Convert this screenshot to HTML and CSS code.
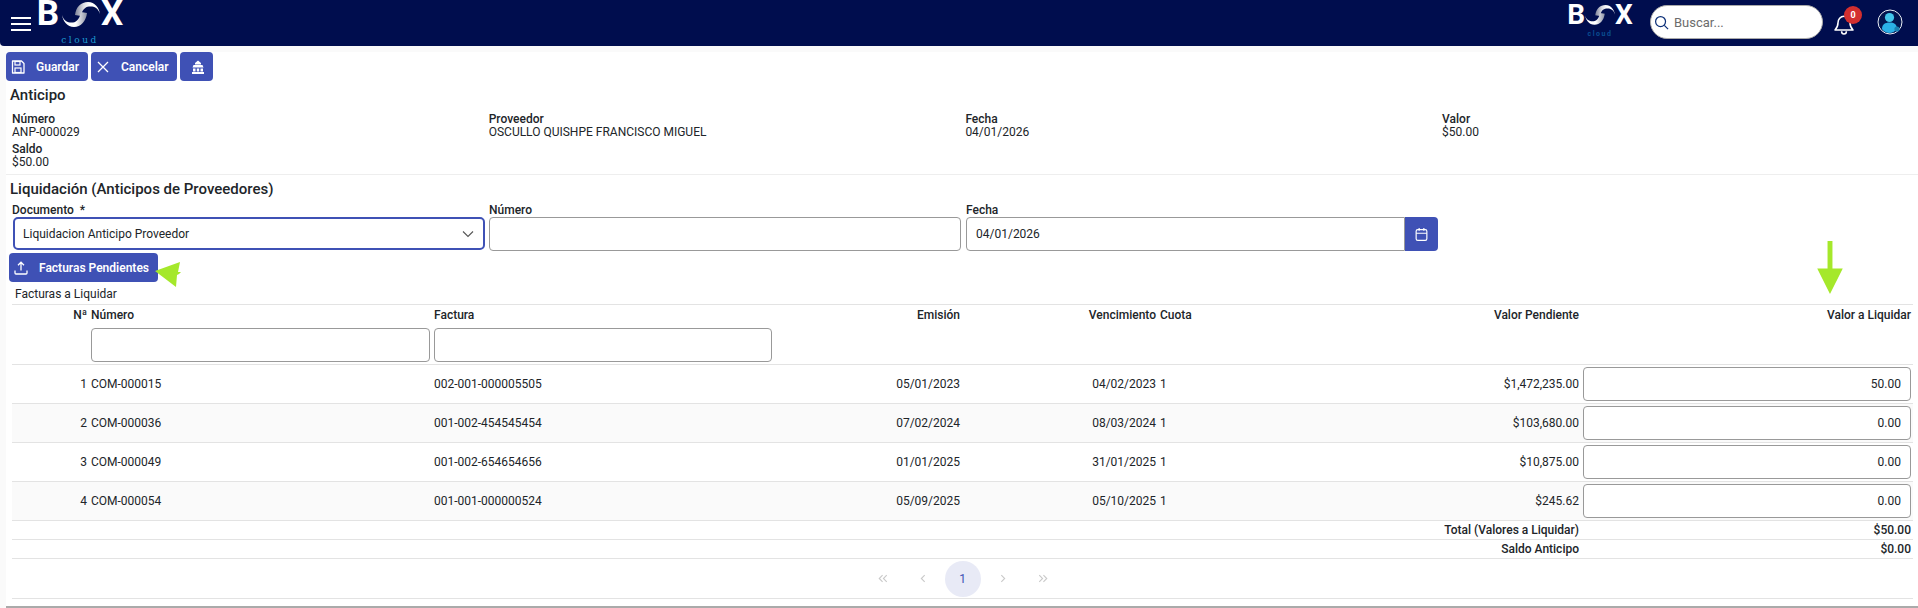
FILE: index.html
```html
<!DOCTYPE html>
<html lang="es">
<head>
<meta charset="utf-8">
<title>Anticipo</title>
<link rel="stylesheet" href="styles.css">
</head>
<body>
<svg class="defs" width="0" height="0" aria-hidden="true">
  <defs>
    <linearGradient id="sw1" gradientUnits="userSpaceOnUse" x1="0" y1="0" x2="25" y2="0"><stop offset="0" stop-color="#fff"/><stop offset=".55" stop-color="#fff"/><stop offset="1" stop-color="#8a8fa3"/></linearGradient>
    <linearGradient id="sw2" gradientUnits="userSpaceOnUse" x1="13" y1="0" x2="38" y2="0"><stop offset="0" stop-color="#7f8499"/><stop offset=".35" stop-color="#dcdde4"/><stop offset=".6" stop-color="#fff"/><stop offset="1" stop-color="#fff"/></linearGradient>
    <symbol id="swoosh" viewBox="0 0 38 26">
      <path d="M13 14C14 6 19 1 26 1C33 1 37 7 38 13C36 6 31 5 27 5.500C23 6 20 9 19 15z" fill="url(#sw2)"/>
      <path d="M0 14C2 21 7 22 11 21.500C15 21 18 17 19 11L25 12C24 20 19 26 12 26C5 26 1 20 0 14z" fill="url(#sw1)"/>
    </symbol>
  </defs>
</svg>
<header class="topbar">
  <button class="menu" aria-label="Menú"><span></span><span></span><span></span></button>
  <div class="logo logo-main">
    <div class="logo-word"><span>B</span><svg class="logo-o"><use href="#swoosh"/></svg><span>X</span></div>
    <div class="logo-sub">cloud</div>
  </div>
  <div class="top-right">
    <div class="logo logo-small">
      <div class="logo-word"><span>B</span><svg class="logo-o"><use href="#swoosh"/></svg><span>X</span></div>
      <div class="logo-sub">cloud</div>
    </div>
    <label class="search">
      <svg class="search-ic" viewBox="0 0 16 16"><circle cx="7" cy="7" r="5.300" fill="none" stroke="#0b2f78" stroke-width="1.300"/><path d="M11 11l4 4" stroke="#0b2f78" stroke-width="1.300"/></svg>
      <input type="text" placeholder="Buscar...">
    </label>
    <div class="bell">
      <svg viewBox="0 0 20 20" class="bell-ic"><path d="M2.500 15c1.500-1.500 2.500-3 2.500-6 0-3 2-5.500 5-5.500s5 2.500 5 5.500c0 3 1 4.500 2.500 6z" fill="none" stroke="#fff" stroke-width="1.300" stroke-linejoin="round"/><path d="M8 16c0 1.500 1 2.300 2 2.300s2-.8 2-2.300" fill="none" stroke="#fff" stroke-width="1.300"/></svg>
      <span class="badge">0</span>
    </div>
    <svg class="avatar" viewBox="0 0 26 26"><circle cx="13" cy="13" r="12" fill="#03154f" stroke="#e9edf5" stroke-width="1"/><circle cx="12.500" cy="8.500" r="4.600" fill="#43c6ec"/><path d="M5 20c0-4.500 3-6.500 7.500-6.500S20 15 20 20c-2 2.800-5 4-7.500 4S6.500 22.500 5 20z" fill="#2bb0e6"/><circle cx="20" cy="20" r="2.600" fill="#1b7fb0"/></svg>
  </div>
</header>

<main class="card">
  <div class="toolbar">
    <button class="btn btn-save"><svg class="ic" viewBox="0 0 16 16"><path d="M2.500 2h9l2.500 2.500v9.500h-11.500z" fill="none" stroke="#fff" stroke-width="1.300" stroke-linejoin="round"/><rect x="5" y="2.500" width="5" height="3.500" fill="none" stroke="#fff" stroke-width="1.200"/><rect x="5" y="9" width="6" height="4.500" fill="none" stroke="#fff" stroke-width="1.200"/></svg><span>Guardar</span></button>
    <button class="btn btn-cancel"><svg class="ic" viewBox="0 0 16 16"><path d="M3 3l10 10M13 3L3 13" stroke="#fff" stroke-width="1.300"/></svg><span>Cancelar</span></button>
    <button class="btn btn-bank" aria-label="Banco"><svg class="ic" viewBox="0 0 16 16"><path d="M8 1.500l3 2.500v1.500H5V4zM3.500 6h9l1 2.500h-11zM3 9.500h2.500v3H3zM6.800 9.500h2.400v3H6.800zM10.500 9.500H13v3h-2.500zM2 13h12v2H2z" fill="#fff"/></svg></button>
  </div>

  <h2 class="title title-first">Anticipo</h2>
  <div class="info">
    <div class="item"><b>Número</b><span>ANP-000029</span></div>
    <div class="item"><b>Proveedor</b><span>OSCULLO QUISHPE FRANCISCO MIGUEL</span></div>
    <div class="item"><b>Fecha</b><span>04/01/2026</span></div>
    <div class="item"><b>Valor</b><span>$50.00</span></div>
    <div class="item"><b>Saldo</b><span>$50.00</span></div>
  </div>
  <hr class="rule">

  <h2 class="title">Liquidación (Anticipos de Proveedores)</h2>
  <div class="form">
    <div class="field">
      <label>Documento&nbsp; *</label>
      <div class="select-wrap">
        <select><option>Liquidacion Anticipo Proveedor</option></select>
        <svg class="chev" viewBox="0 0 12 8"><path d="M1 1.500l5 5 5-5" fill="none" stroke="#555" stroke-width="1.100"/></svg>
      </div>
    </div>
    <div class="field"><label>Número</label><input class="inp" type="text"></div>
    <div class="field">
      <label>Fecha</label>
      <div class="date">
        <input class="inp" type="text" value="04/01/2026">
        <button class="date-btn" aria-label="Calendario"><svg viewBox="0 0 14 14" width="15" height="15"><rect x="2" y="2.500" width="10" height="10" rx="1.500" fill="none" stroke="#fff" stroke-width="1.100"/><path d="M2 5.800h10M4.800 1v2.500M9.200 1v2.500" stroke="#fff" stroke-width="1.100"/></svg></button>
      </div>
    </div>
  </div>

  <div class="pending">
    <button class="btn btn-pend"><svg class="ic" viewBox="0 0 16 16"><path d="M8 10.500V2.500M5 5.200l3-3 3 3M2 10.500v2.500a1 1 0 0 0 1 1h10a1 1 0 0 0 1-1v-2.500" fill="none" stroke="#fff" stroke-width="1.300"/></svg><span>Facturas Pendientes</span></button>
    <svg class="arrow-left" viewBox="0 0 26 25"><path d="M0 9L25 0l-2 10h3l-2 2 -2 1 -1 12z" fill="#a5e82b"/></svg>
  </div>
  <svg class="arrow-down" viewBox="0 0 26 54"><path d="M10.500 0h5v28H26L13 54 0 28h10.500z" fill="#a5e82b"/></svg>

  <div class="subtitle">Facturas a Liquidar</div>
  <table class="grid">
    <colgroup>
      <col class="c-n"><col class="c-num"><col class="c-fac"><col class="c-emi"><col class="c-ven"><col class="c-cuo"><col class="c-pen"><col class="c-val">
    </colgroup>
    <thead>
      <tr>
        <th class="r">Nª</th>
        <th>Número<input class="inp filter" type="text"></th>
        <th>Factura<input class="inp filter" type="text"></th>
        <th class="r">Emisión</th>
        <th class="r">Vencimiento</th>
        <th>Cuota</th>
        <th class="r">Valor Pendiente</th>
        <th class="r">Valor a Liquidar</th>
      </tr>
    </thead>
    <tbody>
      <tr>
        <td class="r">1</td><td>COM-000015</td><td>002-001-000005505</td><td class="r">05/01/2023</td><td class="r">04/02/2023</td><td>1</td><td class="r">$1,472,235.00</td>
        <td><input class="inp amount" type="text" value="50.00"></td>
      </tr>
      <tr class="alt">
        <td class="r">2</td><td>COM-000036</td><td>001-002-454545454</td><td class="r">07/02/2024</td><td class="r">08/03/2024</td><td>1</td><td class="r">$103,680.00</td>
        <td><input class="inp amount" type="text" value="0.00"></td>
      </tr>
      <tr>
        <td class="r">3</td><td>COM-000049</td><td>001-002-654654656</td><td class="r">01/01/2025</td><td class="r">31/01/2025</td><td>1</td><td class="r">$10,875.00</td>
        <td><input class="inp amount" type="text" value="0.00"></td>
      </tr>
      <tr class="alt">
        <td class="r">4</td><td>COM-000054</td><td>001-001-000000524</td><td class="r">05/09/2025</td><td class="r">05/10/2025</td><td>1</td><td class="r">$245.62</td>
        <td><input class="inp amount" type="text" value="0.00"></td>
      </tr>
    </tbody>
    <tfoot>
      <tr><td class="r strong" colspan="7">Total (Valores a Liquidar)</td><td class="r strong">$50.00</td></tr>
      <tr><td class="r strong" colspan="7">Saldo Anticipo</td><td class="r strong">$0.00</td></tr>
      <tr class="pager-row">
        <td colspan="8">
          <nav class="pager">
            <button class="pg" aria-label="Primera"><svg viewBox="0 0 12 10"><path d="M5.500 1L1.500 5l4 4M10.500 1l-4 4 4 4" fill="none" stroke="#c9c9c9" stroke-width="1.300"/></svg></button>
            <button class="pg" aria-label="Anterior"><svg viewBox="0 0 12 10"><path d="M8 1L4 5l4 4" fill="none" stroke="#c9c9c9" stroke-width="1.300"/></svg></button>
            <button class="pg current">1</button>
            <button class="pg" aria-label="Siguiente"><svg viewBox="0 0 12 10"><path d="M4 1l4 4-4 4" fill="none" stroke="#c9c9c9" stroke-width="1.300"/></svg></button>
            <button class="pg" aria-label="Última"><svg viewBox="0 0 12 10"><path d="M1.500 1l4 4-4 4M6.500 1l4 4-4 4" fill="none" stroke="#c9c9c9" stroke-width="1.300"/></svg></button>
          </nav>
        </td>
      </tr>
    </tfoot>
  </table>
</main>
</body>
</html>
```

FILE: styles.css
```css
* { box-sizing: border-box; }
html, body { margin: 0; height: 608px; overflow: hidden; }
body {
  background: #fafafa;
  color: #212529;
  font: 12px/14px Roboto, "Liberation Sans", sans-serif;
}
.defs { position: absolute; }

/* top bar */
.topbar {
  height: 46px;
  background: #000d4e;
  border-bottom-left-radius: 4px;
  display: flex;
  align-items: flex-start;
  color: #fff;
}
.menu {
  width: 20px;
  margin: 17px 0 0 11px;
  padding: 0;
  background: none;
  border: 0;
  display: flex;
  flex-direction: column;
  gap: 4px;
}
.menu span { display: block; height: 2px; background: #fff; }
.logo { display: flex; flex-direction: column; align-items: center; }
.logo-word { display: flex; align-items: flex-start; font-weight: 700; color: #fff; }
.logo-main { margin-left: 7px; width: 84px; }
.logo-main .logo-word { font: 700 35px/28px Roboto, sans-serif; height: 28px; }
.logo-main .logo-o { width: 38px; height: 26px; margin: 1px 1px 0 3px; }
.logo-sub { font-family: "DejaVu Serif", serif; }
.logo-main .logo-sub { font-size: 9px; line-height: 10px; margin-top: 7px; color: #1c9ad0; letter-spacing: 2.500px; }
.top-right { margin-left: auto; display: flex; align-items: flex-start; }
.logo-small { width: 66px; margin-top: 3px; }
.logo-small .logo-word { font: 700 28px/24px Roboto, sans-serif; height: 24px; }
.logo-small .logo-o { width: 30px; height: 21px; margin: 1px 0 0 0; }
.logo-small .logo-sub { font: 700 7px/8px Roboto, sans-serif; letter-spacing: 1.500px; margin-top: 3px; color: #0a4d92; }
.search {
  margin: 5px 0 0 17px;
  width: 173px;
  height: 34px;
  background: #fff;
  border: 1px solid #aaa;
  border-radius: 17px;
  display: flex;
  align-items: center;
  padding-left: 3px;
}
.search-ic { width: 15px; height: 15px; flex: none; }
.search input {
  border: 0;
  outline: 0;
  width: 130px;
  margin-left: 5px;
  background: none;
  font: 13px Roboto, sans-serif;
  padding: 0;
}
.search input::placeholder { color: #6c6c6c; opacity: 1; }
.bell { position: relative; width: 24px; height: 24px; margin: 12px 0 0 9px; }
.bell-ic { width: 24px; height: 24px; display: block; }
.badge {
  position: absolute;
  left: 12px;
  top: -6px;
  width: 18px;
  height: 18px;
  border-radius: 50%;
  background: #d32f2f;
  color: #fff;
  font: 700 9px/18px Roboto, sans-serif;
  text-align: center;
}
.avatar { width: 26px; height: 26px; margin: 9px 15px 0 21px; }

/* card */
.card {
  position: relative;
  margin: 6px 0 0 6px;
  height: 556px;
  background: #fff;
  border-bottom: 2px solid #aaa;
}
.toolbar { display: flex; gap: 3px; }
.btn {
  height: 29px;
  background: #3f51b5;
  color: #fff;
  border: 0;
  border-radius: 4px;
  display: flex;
  align-items: center;
  font: 600 12px Roboto, sans-serif;
  padding: 0 0 0 4px;
  gap: 10px;
}
.ic { width: 16px; height: 16px; flex: none; }
.btn-save { width: 82px; }
.btn-cancel { width: 86px; }
.btn-bank { width: 33px; justify-content: center; padding-left: 3px; }
.title { margin: 0; font: 500 15px/18px Roboto, sans-serif; padding-left: 4px; color: #212529; }
.title-first { margin-top: 5px; }
.info { display: grid; grid-template-columns: repeat(4, 476.7px); margin: 7px 0 0 6px; }
.item { padding: 1px 0; height: 30px; display: flex; flex-direction: column; }
.item b { font-weight: 500; }
.item span { line-height: 13px; }
.rule { border: 0; border-top: 1px solid #eee; margin: 3px 0 5px; }
.form { display: grid; grid-template-columns: repeat(3, 472px); column-gap: 5px; margin: 5px 0 0 6px; }
.field label { display: block; font-weight: 500; height: 14px; line-height: 14px; }
.inp {
  display: block;
  width: 100%;
  height: 34px;
  border: 1px solid #999;
  border-radius: 4px;
  background: #fff;
  font: 12px Roboto, sans-serif;
  color: #212529;
  padding: 0 9px;
  outline: 0;
}
.select-wrap { position: relative; margin-left: 1px; margin-right: -1px; }
.select-wrap select {
  display: block;
  width: 100%;
  height: 33px;
  appearance: none;
  background: #fff;
  border: 2px solid #3f51b5;
  border-radius: 5px;
  font: 12px Roboto, sans-serif;
  color: #212529;
  padding: 0 8px;
  outline: 0;
}
.chev { position: absolute; right: 11px; top: 13px; width: 12px; height: 8px; }
.date { display: flex; }
.date .inp { border-radius: 4px 0 0 4px; flex: 1; }
.date-btn {
  width: 33px;
  height: 34px;
  flex: none;
  background: #3f51b5;
  border: 0;
  border-radius: 0 4px 4px 0;
  padding: 0;
  display: flex;
  align-items: center;
  justify-content: center;
}
.pending { position: relative; margin: 2px 0 0 3px; width: 149px; }
.btn-pend { width: 149px; white-space: nowrap; }
.arrow-left { position: absolute; left: 146px; top: 9px; width: 26px; height: 25px; }
.arrow-down { position: absolute; left: 1811px; top: 189px; width: 26px; height: 53px; }
.subtitle { margin: 5px 0 0 9px; height: 17px; line-height: 14px; }

/* table */
.grid { width: 1901px; margin-left: 6px; border-collapse: collapse; table-layout: fixed; border-top: 1px solid #e3e3e3; }
.c-n { width: 77px; } .c-num { width: 343px; } .c-fac { width: 342px; } .c-emi { width: 188px; }
.c-ven { width: 196px; } .c-cuo { width: 50px; } .c-pen { width: 373px; } .c-val { width: 332px; }
.grid th, .grid td { padding: 2px; border-bottom: 1px solid #e3e3e3; vertical-align: middle; text-align: left; font-size: 12px; }
.grid th { font-weight: 500; vertical-align: top; height: 60px; padding-top: 3px; line-height: 15px; }
.grid .r { text-align: right; }
.grid tbody tr { height: 39px; }
.grid tbody tr.alt td { background: #fafafa; }
.filter { margin-top: 5px; }
.amount { text-align: right; }
.grid td.strong { font-weight: 500; height: 19px; line-height: 14px; }
.grid tfoot td.strong { padding-top: 0; padding-bottom: 0; }
.grid .pager-row td { height: 40px; padding: 0; }
.pager { display: flex; justify-content: center; align-items: center; gap: 4px; }
.pg { width: 36px; height: 36px; border: 0; padding: 0; border-radius: 50%; background: none; display: flex; align-items: center; justify-content: center; color: #3f51b5; font: 12px Roboto, sans-serif; }
.pg svg { width: 10px; height: 9px; }
.pg.current { background: #e8eaf6; }
```
